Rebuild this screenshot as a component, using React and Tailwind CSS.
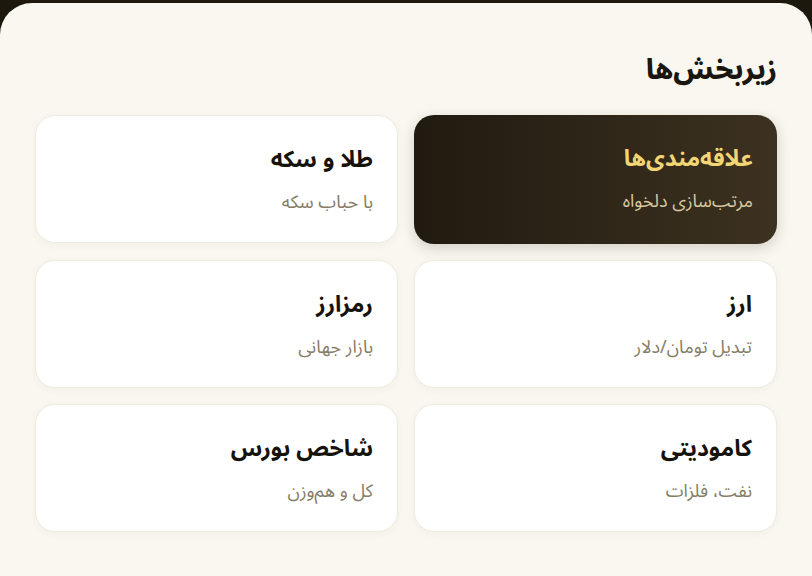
import React from "react";

const items = [
  { title: "علاقه‌مندی‌ها", sub: "مرتب‌سازی دلخواه", active: true },
  { title: "طلا و سکه", sub: "با حباب سکه" },
  { title: "ارز", sub: "تبدیل تومان/دلار" },
  { title: "رمزارز", sub: "بازار جهانی" },
  { title: "کامودیتی", sub: "نفت، فلزات" },
  { title: "شاخص بورس", sub: "کل و هم‌وزن" },
];

export default function App() {
  return (
    <div
      dir="rtl"
      className="w-[812px] h-[576px] overflow-hidden bg-[#1c180e] pt-[3px]"
      style={{ fontFamily: '"Noto Sans Arabic", "DejaVu Sans", sans-serif' }}
    >
      <div className="h-full bg-[#f9f7ef] rounded-t-[32px] px-[35px] pt-[50px]">
        <h1 className="text-[28px] font-extrabold text-[#1a1710] leading-[36px] tracking-tight">
          زیربخش‌ها
        </h1>

        {/* Sections grid */}
        <div className="grid grid-cols-2 gap-x-[16px] gap-y-[16px] mt-[26px]">
          {items.map((it) => (
            <div
              key={it.title}
              className={
                it.active
                  ? "h-[129px] rounded-[20px] px-[24px] pt-[29px] bg-gradient-to-l from-[#3d3220] to-[#201a10] shadow-[0_4px_14px_rgba(40,30,10,0.18)]"
                  : "h-[128px] rounded-[20px] px-[24px] pt-[29px] bg-white border border-[#efebdf] shadow-[0_2px_8px_rgba(60,50,20,0.04)]"
              }
            >
              <div
                className={
                  "text-[23px] font-bold leading-[30px] " +
                  (it.active ? "text-[#f2d676]" : "text-[#16130d]")
                }
              >
                {it.title}
              </div>
              <div
                className={
                  "text-[18px] mt-[14px] leading-[26px] " +
                  (it.active ? "text-[#d9c9a0]" : "text-[#857c66]")
                }
              >
                {it.sub}
              </div>
            </div>
          ))}
        </div>
      </div>
    </div>
  );
}
